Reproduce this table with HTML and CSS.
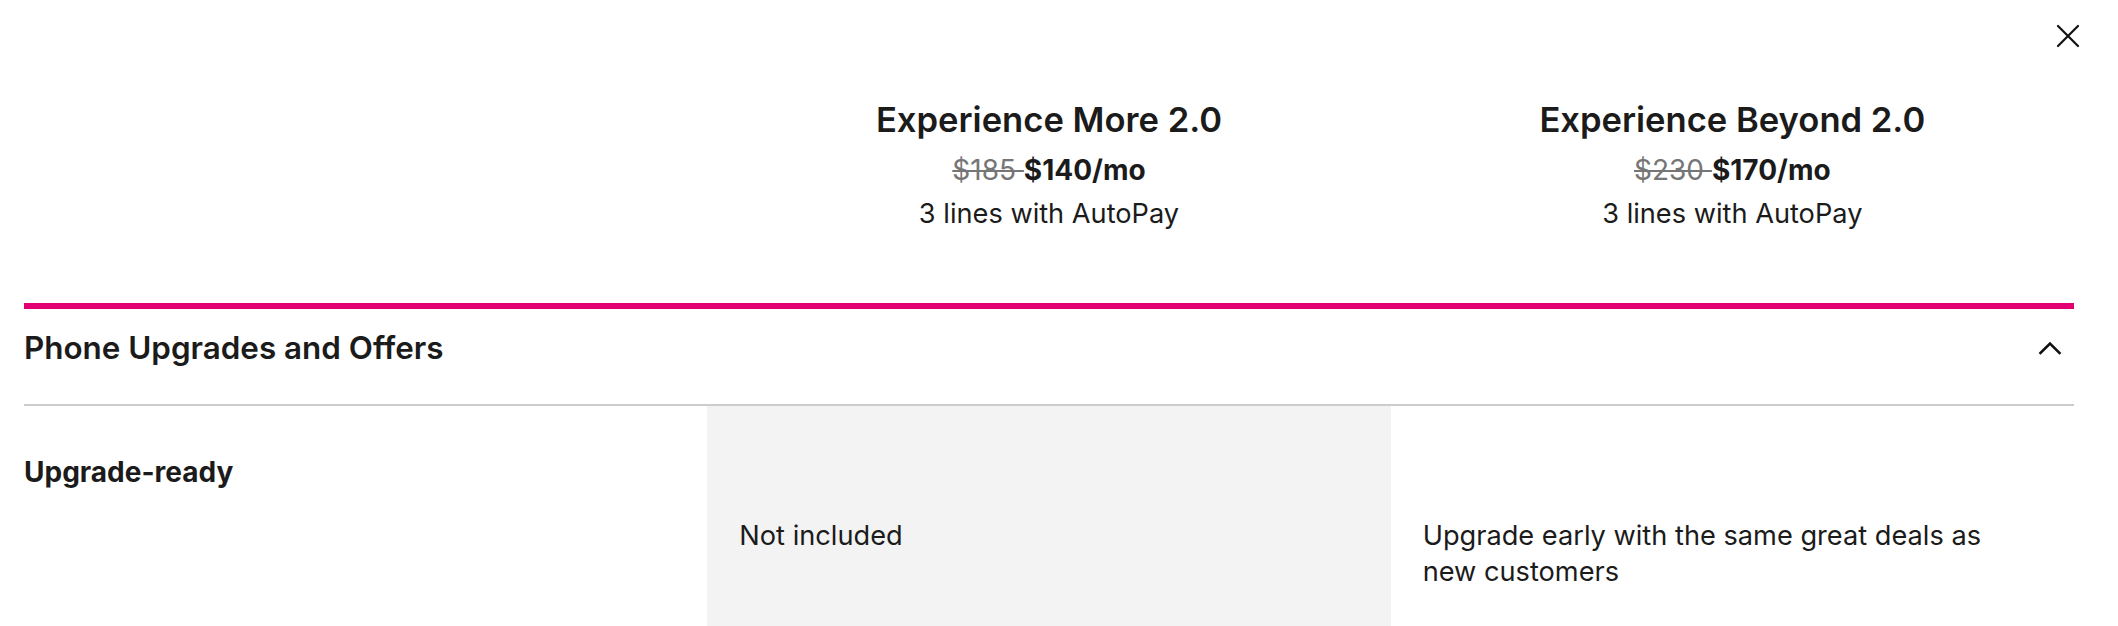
FILE: index.html
```html
<!DOCTYPE html>
<html lang="en">
<head>
<meta charset="utf-8">
<title>Compare plans</title>
<link rel="stylesheet" href="styles.css">
</head>
<body>
<div class="modal">
  <button class="close" aria-label="Close">
    <svg width="24" height="24" viewBox="0 0 24 24" fill="none" stroke="#111" stroke-width="2.2" stroke-linecap="round"><path d="M2 2 L22 22 M22 2 L2 22"/></svg>
  </button>

  <div class="plans">
    <div class="plan-spacer"></div>
    <div class="plan">
      <h2 class="plan-name">Experience More 2.0</h2>
      <p class="plan-price"><s class="old">$185 </s><strong>$140/mo</strong></p>
      <p class="plan-note">3 lines with AutoPay</p>
    </div>
    <div class="plan">
      <h2 class="plan-name">Experience Beyond 2.0</h2>
      <p class="plan-price"><s class="old">$230 </s><strong>$170/mo</strong></p>
      <p class="plan-note">3 lines with AutoPay</p>
    </div>
  </div>

  <section class="group">
    <div class="group-head">
      <h3 class="group-title">Phone Upgrades and Offers</h3>
      <svg class="chevron" width="24" height="24" viewBox="0 0 24 24" fill="none" stroke="#111" stroke-width="2.6" stroke-linecap="square" stroke-linejoin="miter"><polyline points="2.5,17 12,7.5 21.5,17"/></svg>
    </div>
    <div class="row">
      <div class="cell label">Upgrade-ready</div>
      <div class="cell value muted">Not included</div>
      <div class="cell value">Upgrade early with the same great deals as new customers</div>
    </div>
  </section>
</div>
</body>
</html>
```

FILE: styles.css
```css
* { box-sizing: border-box; }

html, body {
  margin: 0;
  background: #ffffff;
}

body {
  font-family: Inter, "Noto Sans", "Liberation Sans", sans-serif;
  color: #1b1b1b;
  overflow: hidden;
}

.modal {
  position: relative;
  padding: 97px 44px 0 24px;
}

.close {
  position: absolute;
  top: 24px;
  right: 38px;
  width: 24px;
  height: 24px;
  padding: 0;
  border: 0;
  background: none;
  line-height: 0;
  cursor: pointer;
}

.plans {
  display: grid;
  grid-template-columns: repeat(3, 1fr);
}

.plan {
  text-align: center;
}

.plan-name {
  margin: 0;
  font-size: 34.6px;
  line-height: 44px;
  font-weight: 600;
}

.plan-price {
  margin: 8px 0 0;
  font-size: 28px;
  line-height: 43px;
}

.plan-price .old {
  color: #767676;
  font-weight: 400;
  text-decoration: line-through;
  text-decoration-thickness: 2px;
}

.plan-price strong {
  font-weight: 700;
}

.plan-note {
  margin: 0;
  font-size: 27.2px;
  line-height: 43px;
}

.group {
  margin-top: 68px;
  border-top: 6px solid #e20074;
}

.group-head {
  display: flex;
  align-items: center;
  justify-content: space-between;
  padding: 19px 12px 36px 0;
  border-bottom: 2px solid #cccccc;
}

.group-title {
  margin: 0;
  font-size: 31.4px;
  line-height: 40px;
  font-weight: 600;
}

.chevron {
  display: block;
}

.row {
  display: grid;
  grid-template-columns: repeat(3, 1fr);
  min-height: 260px;
}

.cell {
  font-size: 27.2px;
  line-height: 36px;
}

.label {
  padding-top: 48px;
  font-size: 28px;
  font-weight: 700;
}

.value {
  padding: 112px 56px 40px 32px;
}

.muted {
  background: #f3f3f3;
}
```
